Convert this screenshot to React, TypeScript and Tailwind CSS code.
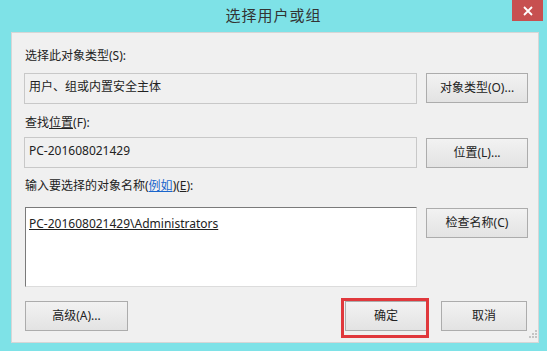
import React from "react";

const font = { fontFamily: '"Noto Sans", "Noto Sans CJK SC", sans-serif' };

const Btn: React.FC<{ label: React.ReactNode; className?: string }> = ({ label, className = "" }) => (
  <button
    className={
      "h-[30px] border border-[#acacac] bg-gradient-to-b from-[#f2f2f2] to-[#e3e3e3] text-[12px] text-[#222] flex items-center justify-center " +
      className
    }
  >
    {label}
  </button>
);

const ReadBox: React.FC<{ text: string }> = ({ text }) => (
  <div className="flex-1 h-[31px] border border-[#c8c8c8] bg-[#f0f0f0] px-[4px] pt-[5px] text-[12px] leading-[16px] text-[#222]">
    {text}
  </div>
);

export default function App() {
  return (
    <div className="w-[547px] h-[351px] bg-[#7ee2e7] flex flex-col text-[#222]" style={font}>
      {/* 标题栏 */}
      <div className="relative h-[32px] flex items-center justify-center">
        <span className="text-[15px] text-[#333] tracking-[1px] -mt-[1px]">选择用户或组</span>
        <div className="absolute right-[4px] top-0 w-[31px] h-[21px] bg-[#c75050] flex items-center justify-center">
          <svg width="10" height="10" viewBox="0 0 10 10">
            <path d="M1 1L9 9M9 1L1 9" stroke="#fff" strokeWidth="1.8" />
          </svg>
        </div>
      </div>

      {/* 客户区 */}
      <div className="relative ml-[11px] mr-[8px] h-[311px] bg-[#f0f0f0] border border-[#d6d6d6] pl-[12px] pr-[10px] pt-[15px] text-[12px]">
        <div className="leading-[16px] pl-[1px]">选择此对象类型(S):</div>
        <div className="flex items-start gap-[9px] mt-[9px]">
          <ReadBox text="用户、组或内置安全主体" />
          <Btn label="对象类型(O)..." className="w-[102px]" />
        </div>

        <div className="leading-[16px] pl-[1px] mt-[11px]">
          查找<span className="underline">位置</span>(F):
        </div>
        <div className="flex items-start gap-[9px] mt-[6px]">
          <ReadBox text="PC-201608021429" />
          <Btn label="位置(L)..." className="w-[102px] mt-[1px]" />
        </div>

        <div className="leading-[16px] pl-[1px] mt-[10px]">
          输入要选择的对象名称(<span className="text-[#1a66cc] underline">例如</span>)(<span className="underline">E</span>):
        </div>
        <div className="flex items-start gap-[9px] mt-[13px]">
          <div className="flex-1 h-[80px] bg-white border-t border-l border-[#7a7a7a] border-r border-b border-r-[#dcdcdc] border-b-[#dcdcdc] ml-[1px] px-[3px] pt-[8px] leading-[16px]">
            <span className="underline">PC-201608021429\Administrators</span>
          </div>
          <Btn label="检查名称(C)" className="w-[102px] mt-[1px]" />
        </div>

        <div className="flex items-start mt-[14px]">
          <Btn label="高级(A)..." className="w-[103px] ml-[1px]" />
          <div className="flex-1" />
          <div className="relative">
            <Btn label="确定" className="w-[82px]" />
            <div className="absolute -left-[4px] -top-[3px] w-[88px] h-[40px] border-[3px] border-[#e0383c]" />
          </div>
          <Btn label="取消" className="w-[86px] ml-[14px] mr-[1px]" />
        </div>

        {/* 尺寸调整手柄 */}
        <svg className="absolute right-[1px] bottom-[4px]" width="8" height="8" viewBox="0 0 8 8">
          <rect x="6" y="0" width="2" height="2" fill="#c4c4c4" />
          <rect x="3" y="3" width="2" height="2" fill="#c4c4c4" />
          <rect x="6" y="3" width="2" height="2" fill="#c4c4c4" />
          <rect x="0" y="6" width="2" height="2" fill="#c4c4c4" />
          <rect x="3" y="6" width="2" height="2" fill="#c4c4c4" />
          <rect x="6" y="6" width="2" height="2" fill="#c4c4c4" />
        </svg>
      </div>
    </div>
  );
}
